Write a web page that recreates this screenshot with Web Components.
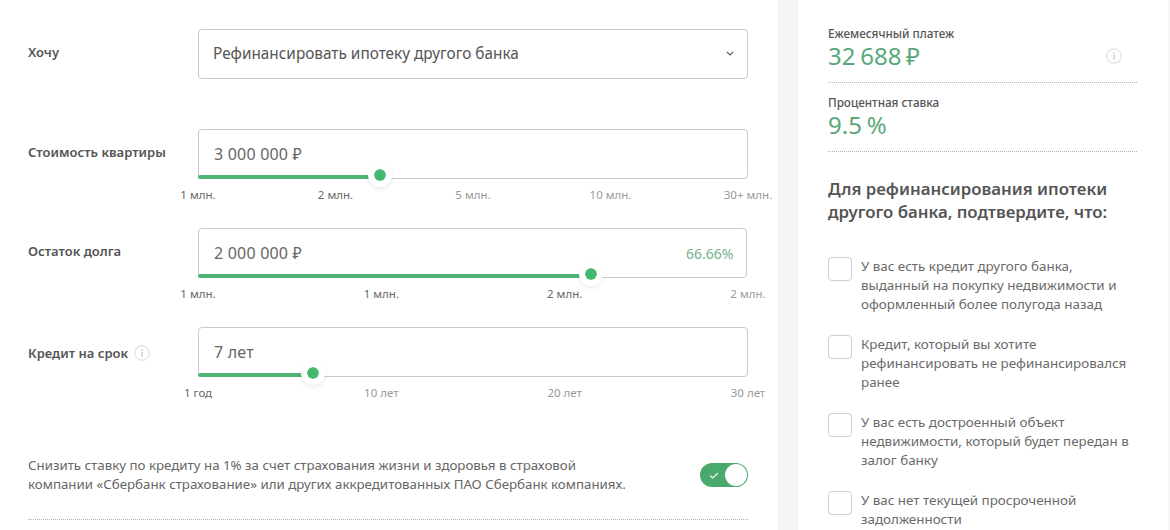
<!DOCTYPE html>
<html lang="ru">
<head>
<meta charset="utf-8">
<title>Ипотека</title>
<style>
  html, body { margin: 0; height: 530px; overflow: hidden; }
  body {
    background: #f2f4f6;
    color: #555;
    font-family: "Noto Sans", "Open Sans", sans-serif;
  }
  .page { display: flex; gap: 20px; height: 530px; }
</style>
</head>
<body>
<div class="page">
  <calc-form>
    <form-row label="Хочу" gap="50">
      <select-box>Рефинансировать ипотеку другого банка</select-box>
    </form-row>
    <form-row label="Стоимость квартиры">
      <range-field value="3 000 000 ₽" thumb="182" ticks="1 млн.|2 млн.|5 млн.|10 млн.|30+ млн." active="2"></range-field>
    </form-row>
    <form-row label="Остаток долга">
      <range-field value="2 000 000 ₽" note="66.66%" thumb="393" narrow ticks="1 млн.|1 млн.|2 млн.|2 млн." active="3"></range-field>
    </form-row>
    <form-row label="Кредит на срок" hint>
      <range-field value="7 лет" thumb="115" ticks="1 год|10 лет|20 лет|30 лет" active="1"></range-field>
    </form-row>
    <insurance-row>Снизить ставку по кредиту на 1% за счет страхования жизни и здоровья в страховой компании «Сбербанк страхование» или других аккредитованных ПАО Сбербанк компаниях.</insurance-row>
  </calc-form>
  <calc-summary>
    <summary-stat label="Ежемесячный платеж" value="32 688 ₽" hint></summary-stat>
    <summary-stat label="Процентная ставка" value="9.5 %"></summary-stat>
    <h2>Для рефинансирования ипотеки другого банка, подтвердите, что:</h2>
    <check-item>У вас есть кредит другого банка, выданный на покупку недвижимости и оформленный более полугода назад</check-item>
    <check-item>Кредит, который вы хотите рефинансировать не рефинансировался ранее</check-item>
    <check-item>У вас есть достроенный объект недвижимости, который будет передан в залог банку</check-item>
    <check-item>У вас нет текущей просроченной задолженности</check-item>
  </calc-summary>
</div>

<script>
const infoIcon = `
  <svg viewBox="0 0 16 16" width="16" height="16" fill="none">
    <circle cx="8" cy="8" r="7.2" stroke="#dfe2e2" stroke-width="1.2"/>
    <circle cx="8" cy="4.9" r="1" fill="#d4d8d8"/>
    <rect x="7.1" y="6.8" width="1.8" height="5" rx=".6" fill="#d4d8d8"/>
  </svg>`;

class CalcForm extends HTMLElement {
  constructor() {
    super();
    this.attachShadow({ mode: "open" });
    this.shadowRoot.innerHTML = `
      <style>
        :host {
          display: block;
          box-sizing: border-box;
          width: 778px;
          flex: none;
          padding: 29px 30px 0 28px;
          background: #fff;
        }
      </style>
      <slot></slot>`;
  }
}

class FormRow extends HTMLElement {
  constructor() {
    super();
    this.attachShadow({ mode: "open" });
  }

  connectedCallback() {
    const label = this.getAttribute("label");
    const gap = this.getAttribute("gap") || 0;
    this.shadowRoot.innerHTML = `
      <style>
        :host {
          display: grid;
          grid-template-columns: 170px 550px;
          margin-bottom: ${gap}px;
        }
        .label {
          display: flex;
          align-items: center;
          gap: 6px;
          height: 46px;
          font-size: 13px;
          font-weight: 600;
          color: #555;
        }
        :host([hint]) .label { height: 51px; }
        svg { display: block; }
      </style>
      <div class="label"><span>${label}</span>${this.hasAttribute("hint") ? infoIcon : ""}</div>
      <div><slot></slot></div>`;
  }
}

class SelectBox extends HTMLElement {
  constructor() {
    super();
    this.attachShadow({ mode: "open" });
    this.shadowRoot.innerHTML = `
      <style>
        :host {
          display: flex;
          align-items: center;
          justify-content: space-between;
          box-sizing: border-box;
          height: 50px;
          padding: 0 13px 2px 14px;
          border: 1px solid #c9c9c9;
          border-radius: 4px;
          font-size: 15.35px;
          color: #555;
        }
        svg { display: block; }
      </style>
      <span><slot></slot></span>
      <svg width="8" height="5" viewBox="0 0 8 5" fill="none">
        <path d="M.8.8 4 3.9 7.200.8" stroke="#555" stroke-width="1.1"/>
      </svg>`;
  }
}

class RangeField extends HTMLElement {
  constructor() {
    super();
    this.attachShadow({ mode: "open" });
  }

  connectedCallback() {
    const thumb = Number(this.getAttribute("thumb"));
    const active = Number(this.getAttribute("active"));
    const note = this.getAttribute("note");
    const ticks = this.getAttribute("ticks").split("|").map((t, i) =>
      `<span class="tick${i < active ? " on" : ""}"><span>${t}</span></span>`).join("");
    this.shadowRoot.innerHTML = `
      <style>
        :host { display: block; height: 99px; }
        .box {
          position: relative;
          display: flex;
          align-items: center;
          justify-content: space-between;
          box-sizing: border-box;
          height: 50px;
          padding: 0 12px 0 15px;
          border: 1px solid #c9c9c9;
          border-radius: 4px;
          font-size: 16px;
          letter-spacing: .2px;
          color: #666;
        }
        :host([narrow]) .box { margin-right: 1.5px; }
        .note { font-size: 14px; letter-spacing: 0; color: #74b08c; }
        /* track and thumb lie over the bottom edge of the box */
        .fill {
          position: absolute;
          left: -1px;
          bottom: -1px;
          width: ${thumb - 11}px;
          height: 4px;
          border-radius: 2px 0 0 2px;
          background: #4fb373;
        }
        .thumb {
          position: absolute;
          left: ${thumb - 7}px;
          bottom: -3px;
          width: 12px;
          height: 12px;
          border: 6px solid #fff;
          border-radius: 50%;
          background: #44b86e;
          background-clip: padding-box;
          margin: -6px;
          box-shadow: 0 2px 5px rgba(0, 0, 0, .08);
        }
        .ticks {
          display: flex;
          justify-content: space-between;
          margin-top: 8px;
          font-size: 11.5px;
          line-height: 16px;
          color: #9a9a9a;
        }
        .tick { width: 0; display: flex; justify-content: center; white-space: nowrap; }
        .tick.on { color: #666; }
      </style>
      <div class="box">
        <span>${this.getAttribute("value")}</span>
        ${note ? `<span class="note">${note}</span>` : ""}
        <span class="fill"></span>
        <span class="thumb"></span>
      </div>
      <div class="ticks">${ticks}</div>`;
  }
}

class InsuranceRow extends HTMLElement {
  constructor() {
    super();
    this.attachShadow({ mode: "open" });
    this.shadowRoot.innerHTML = `
      <style>
        :host {
          display: flex;
          justify-content: space-between;
          align-items: center;
          margin-top: 30px;
          padding-bottom: 25px;
          border-bottom: 1px dotted #b5b5b5;
          font-size: 13.3px;
          line-height: 19px;
          color: #666;
        }
        .text { width: 604px; }
        .toggle {
          position: relative;
          width: 48px;
          height: 24px;
          border-radius: 12px;
          background: #4aa96c;
        }
        svg { position: absolute; left: 9px; top: 9px; }
        .knob {
          position: absolute;
          right: 1px;
          top: 1px;
          width: 22px;
          height: 22px;
          border-radius: 50%;
          background: #fff;
        }
      </style>
      <div class="text"><slot></slot></div>
      <div class="toggle">
        <svg width="10" height="7" viewBox="0 0 10 7" fill="none"><path d="M1 3.5 3.6 6 9 1" stroke="#e8f5ec" stroke-width="1.2"/></svg>
        <span class="knob"></span>
      </div>`;
  }
}

class CalcSummary extends HTMLElement {
  constructor() {
    super();
    this.attachShadow({ mode: "open" });
    this.shadowRoot.innerHTML = `
      <style>
        :host {
          display: block;
          box-sizing: border-box;
          flex: 1;
          padding: 26px 31px 0 30px;
          border-right: 2px solid #f6f7f8;
          background: #fff;
        }
        ::slotted(h2) {
          margin: 25px 0 34px;
          font-size: 16.8px;
          line-height: 23px;
          font-weight: 600;
          color: #555;
        }
      </style>
      <slot></slot>`;
  }
}

class SummaryStat extends HTMLElement {
  constructor() {
    super();
    this.attachShadow({ mode: "open" });
  }

  connectedCallback() {
    this.shadowRoot.innerHTML = `
      <style>
        :host {
          display: block;
          height: 56px;
          margin-bottom: 12px;
          border-bottom: 1px dotted #b5b5b5;
        }
        .label { font-size: 11.7px; line-height: 15px; font-weight: 500; color: #555; }
        .row { display: flex; justify-content: space-between; align-items: center; padding-right: 15px; }
        .value { font-size: 24px; line-height: 30px; word-spacing: -1.5px; color: #5aa87a; }
        svg { display: block; }
      </style>
      <div class="label">${this.getAttribute("label")}</div>
      <div class="row">
        <span class="value">${this.getAttribute("value")}</span>
        ${this.hasAttribute("hint") ? infoIcon : ""}
      </div>`;
  }
}

class CheckItem extends HTMLElement {
  constructor() {
    super();
    this.attachShadow({ mode: "open" });
    this.shadowRoot.innerHTML = `
      <style>
        :host {
          display: flex;
          gap: 9px;
          margin-bottom: 21px;
          font-size: 13.4px;
          line-height: 19px;
          color: #6a6a6a;
        }
        .box {
          flex: none;
          box-sizing: border-box;
          width: 24px;
          height: 24px;
          border: 1px solid #cfcfcf;
          border-radius: 4px;
          background: #fff;
        }
        .text { width: 274px; }
      </style>
      <span class="box"></span>
      <span class="text"><slot></slot></span>`;
  }
}

customElements.define("calc-form", CalcForm);
customElements.define("form-row", FormRow);
customElements.define("select-box", SelectBox);
customElements.define("range-field", RangeField);
customElements.define("insurance-row", InsuranceRow);
customElements.define("calc-summary", CalcSummary);
customElements.define("summary-stat", SummaryStat);
customElements.define("check-item", CheckItem);
</script>
</body>
</html>
